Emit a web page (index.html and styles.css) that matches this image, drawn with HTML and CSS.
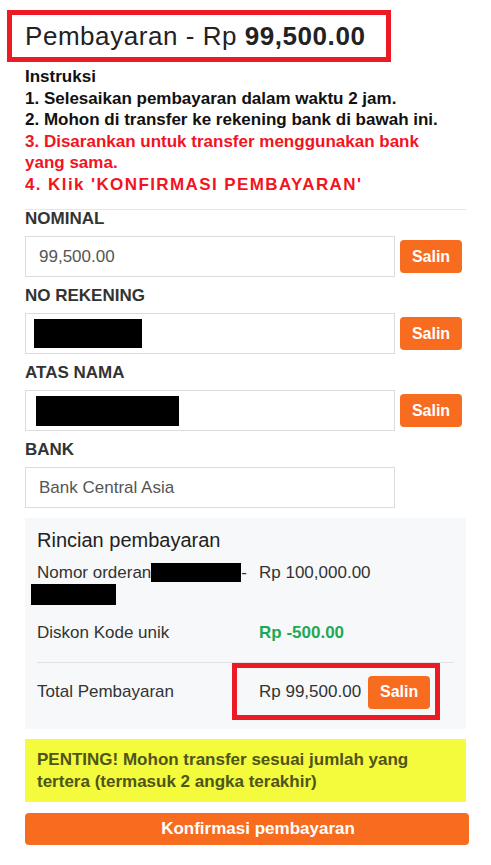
FILE: index.html
```html
<!DOCTYPE html>
<html lang="id">

<head>
    <meta charset="UTF-8">
    <meta name="viewport" content="width=device-width, initial-scale=1.0">
    <title>Pembayaran</title>
    <link rel="stylesheet" href="styles.css">
</head>

<body>
    <div class="title-box">
        <h2>Pembayaran - Rp <b>99,500.00</b></h2>
    </div>

    <div class="content">
        <div class="instructions">
            <div>Instruksi</div>
            <div>1. Selesaikan pembayaran dalam waktu 2 jam.</div>
            <div>2. Mohon di transfer ke rekening bank di bawah ini.</div>
            <div class="red">3. Disarankan untuk transfer menggunakan bank yang sama.</div>
            <div class="red wide">4. Klik 'KONFIRMASI PEMBAYARAN'</div>
        </div>

        <hr class="divider">

        <div class="field">
            <label>NOMINAL</label>
            <div class="field-row">
                <div class="input">99,500.00</div>
                <button class="btn-copy">Salin</button>
            </div>
        </div>

        <div class="field">
            <label>NO REKENING</label>
            <div class="field-row">
                <div class="input"><span class="redact redact-rek"></span></div>
                <button class="btn-copy">Salin</button>
            </div>
        </div>

        <div class="field">
            <label>ATAS NAMA</label>
            <div class="field-row">
                <div class="input"><span class="redact redact-name"></span></div>
                <button class="btn-copy">Salin</button>
            </div>
        </div>

        <div class="field">
            <label>BANK</label>
            <div class="field-row">
                <div class="input">Bank Central Asia</div>
            </div>
        </div>

        <div class="summary">
            <h3>Rincian pembayaran</h3>
            <div class="summary-row">
                <div>Nomor orderan<span class="redact redact-order"></span>-<span class="redact redact-order2"></span></div>
                <div>Rp 100,000.00</div>
            </div>
            <div class="summary-row discount">
                <div>Diskon Kode unik</div>
                <div class="green">Rp -500.00</div>
            </div>
            <div class="summary-row total">
                <div>Total Pembayaran</div>
                <div class="total-value">Rp 99,500.00 <button class="btn-copy">Salin</button></div>
                <div class="highlight"></div>
            </div>
        </div>

        <div class="notice">
            PENTING! Mohon transfer sesuai jumlah yang tertera (termasuk 2 angka terakhir)
        </div>

        <button class="btn-confirm">Konfirmasi pembayaran</button>
    </div>
</body>

</html>
```

FILE: styles.css
```css
body {
    margin: 0;
    font-family: "Liberation Sans", Arial, sans-serif;
    color: #222;
    background-color: #fff;
}

.title-box {
    display: inline-block;
    margin: 10px 0 0 7px;
    border: 5px solid #ec1a24;
    padding: 0 21px 0 13px;
}

.title-box h2 {
    margin: 0;
    font-size: 26px;
    font-weight: normal;
    letter-spacing: 0.55px;
    line-height: 42px;
    color: #222;
}

.content {
    padding: 0 25px 0 25px;
}

.instructions {
    margin-top: 4px;
    max-width: 430px;
    font-size: 17px;
    font-weight: bold;
    line-height: 21.5px;
    color: #111;
}

.instructions .red {
    color: #f2141f;
}

.instructions .wide {
    letter-spacing: 1.4px;
}

.divider {
    border: none;
    border-top: 1px solid #e6e6e6;
    margin: 14px 0 0 0;
}

.field label {
    display: block;
    font-size: 17px;
    font-weight: bold;
    line-height: 18px;
    color: #333;
    margin-bottom: 8px;
}

.field {
    margin-bottom: 10px;
}

.field-row {
    display: flex;
    align-items: center;
    gap: 5px;
}

.input {
    box-sizing: border-box;
    width: 370px;
    height: 41px;
    border: 1px solid #dcdcdc;
    padding: 0 13px;
    font-size: 17px;
    color: #555;
    display: flex;
    align-items: center;
}

.redact {
    display: inline-block;
    background-color: #000;
}

.redact-rek {
    width: 108px;
    height: 29px;
    margin-left: -5px;
}

.redact-name {
    width: 143px;
    height: 30px;
    margin-left: -3px;
}

.btn-copy {
    width: 62px;
    height: 33px;
    border: none;
    border-radius: 4px;
    background-color: #f86c1f;
    color: #fff;
    font-family: inherit;
    font-size: 16px;
    font-weight: bold;
    padding: 0;
}

.summary {
    margin-top: 10px;
    background-color: #f7f8fa;
    padding: 11px 12px 8px 12px;
    font-size: 17px;
    color: #333;
}

.summary h3 {
    margin: 0 0 12px 0;
    font-size: 20px;
    font-weight: normal;
    line-height: 22px;
    color: #222;
}

.summary-row {
    display: grid;
    grid-template-columns: 222px 1fr;
    line-height: 20px;
}

.redact-order {
    width: 90px;
    height: 19px;
    vertical-align: -4px;
}

.redact-order2 {
    display: block;
    width: 85px;
    height: 21px;
    margin: 1px 0 0 -6px;
}

.discount {
    margin-top: 18px;
    padding-bottom: 19px;
    border-bottom: 1px solid #e2e2e2;
}

.green {
    color: #1ea955;
    font-weight: bold;
}

.total {
    position: relative;
    align-items: center;
    height: 58px;
}

.total-value {
    display: flex;
    align-items: center;
    gap: 7px;
}

.highlight {
    position: absolute;
    left: 195px;
    top: 0;
    width: 208px;
    height: 57px;
    box-sizing: border-box;
    border: 5px solid #ec1a24;
}

.notice {
    margin-top: 10px;
    background-color: #f4fa3c;
    padding: 10px 12px 9px 12px;
    font-size: 17px;
    font-weight: bold;
    line-height: 22px;
    color: #4d5519;
}

.btn-confirm {
    display: block;
    margin-top: 11px;
    width: 444px;
    height: 32px;
    border: none;
    border-radius: 4px;
    background-color: #f86c1f;
    color: #fff;
    font-family: inherit;
    font-size: 17px;
    font-weight: bold;
    padding: 0 0 0 22px;
}
```
